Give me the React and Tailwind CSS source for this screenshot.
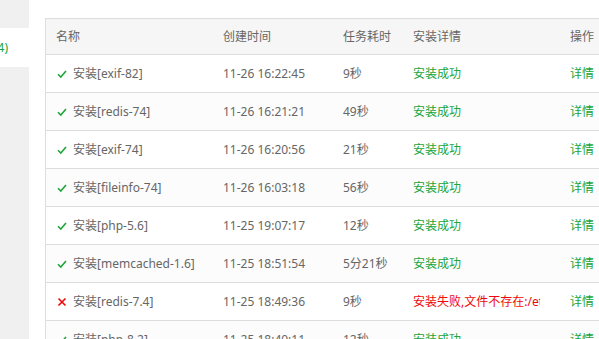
const rows = [
  { name: "安装[exif-82]", time: "11-26 16:22:45", cost: "9秒", ok: true },
  { name: "安装[redis-74]", time: "11-26 16:21:21", cost: "49秒", ok: true },
  { name: "安装[exif-74]", time: "11-26 16:20:56", cost: "21秒", ok: true },
  { name: "安装[fileinfo-74]", time: "11-26 16:03:18", cost: "56秒", ok: true },
  { name: "安装[php-5.6]", time: "11-25 19:07:17", cost: "12秒", ok: true },
  { name: "安装[memcached-1.6]", time: "11-25 18:51:54", cost: "5分21秒", ok: true },
  { name: "安装[redis-7.4]", time: "11-25 18:49:36", cost: "9秒", ok: false, msg: "安装失败,文件不存在:/etc/init.d/redis" },
  { name: "安装[php-8.2]", time: "11-25 18:40:11", cost: "12秒", ok: true },
];

const Check = () => (
  <svg width="10" height="10" viewBox="0 0 10 10" className="shrink-0">
    <path d="M1 5.2 L3.8 8 L9 2" fill="none" stroke="#20a53a" strokeWidth="1.6" />
  </svg>
);

const Cross = () => (
  <svg width="10" height="10" viewBox="0 0 10 10" className="shrink-0">
    <path d="M1.5 1.5 L8.5 8.5 M8.5 1.5 L1.5 8.5" fill="none" stroke="#ef0808" strokeWidth="1.6" />
  </svg>
);

const cols = "grid grid-cols-[167px_120px_70px_145px_56px]";

export default function App() {
  return (
    <div
      className="w-[599px] h-[339px] overflow-hidden flex bg-white text-[12px]"
      style={{ fontFamily: '"Noto Sans", "Noto Sans CJK SC", sans-serif' }}
    >
      <div className="w-[29px] shrink-0 bg-[#f0f0f0] pt-[28px]">
        <div className="h-[39px] bg-white flex items-center justify-end overflow-hidden whitespace-nowrap pr-[21px] text-[#20a53a]">
          任务列表(4)
        </div>
      </div>
      <div className="pl-[16px] pt-[18px] shrink-0">
        <div className="w-[560px] border-t border-l border-[#ddd] text-[#666]">
          <div className={`${cols} h-[36px] bg-[#f6f6f6] border-b border-[#ddd] items-center`}>
            <div className="pl-[10px]">名称</div>
            <div className="pl-[10px]">创建时间</div>
            <div className="pl-[10px]">任务耗时</div>
            <div className="pl-[10px]">安装详情</div>
            <div className="pr-[10px] text-right">操作</div>
          </div>
          {rows.map((r, i) => (
            <div
              key={i}
              className={`${cols} h-[38px] border-b border-[#ddd] items-center ${i % 2 ? "bg-[#fcfcfc]" : "bg-white"}`}
            >
              <div className="pl-[11px] flex items-center gap-[6px] whitespace-nowrap">
                {r.ok ? <Check /> : <Cross />}
                <span>{r.name}</span>
              </div>
              <div className="pl-[10px] whitespace-nowrap">{r.time}</div>
              <div className="pl-[10px] whitespace-nowrap">{r.cost}</div>
              <div className="pl-[10px] pr-[8px]">
                <div
                  className={`overflow-hidden whitespace-nowrap ${r.ok ? "text-[#20a53a]" : "text-[#ef0808]"}`}
                >
                  {r.ok ? "安装成功" : r.msg}
                </div>
              </div>
              <div className="pr-[10px] text-right text-[#20a53a] whitespace-nowrap">详情</div>
            </div>
          ))}
        </div>
      </div>
    </div>
  );
}
